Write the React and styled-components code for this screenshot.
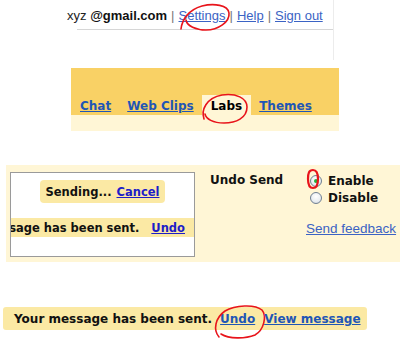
import styled, { createGlobalStyle } from "styled-components";

const GlobalStyle = createGlobalStyle`
  html, body {
    margin: 0;
    padding: 0;
    background: #ffffff;
  }
  body {
    width: 400px;
    height: 344px;
    overflow: hidden;
    font-family: "DejaVu Sans", Verdana, sans-serif;
  }
`;

const Page = styled.div`
  width: 400px;
  height: 344px;
  overflow: hidden;
`;

/* top account bar */
const AccountArea = styled.div`
  margin-left: 77px;
  width: 256px;
  height: 60px;
  border-right: 1px solid #ececec;
`;

const AccountLine = styled.div`
  height: 30px;
  box-sizing: border-box;
  padding-top: 8px;
  border-bottom: 1px solid #d6d6d6;
`;

const UserText = styled.div`
  margin-left: -10px;
  font-family: "Liberation Sans", Arial, sans-serif;
  font-size: 13px;
  line-height: 16px;
  color: #222;
  white-space: nowrap;
  b {
    color: #111;
  }
`;

const Sep = styled.span`
  color: #777;
  margin: 0 4px;
`;

const TopLink = styled.a`
  color: #3b63c4;
  text-decoration: underline;
`;

/* header tabs */
const Header = styled.div`
  margin: 8px 0 0 71px;
  width: 268px;
`;

const TabBand = styled.div`
  height: 47px;
  box-sizing: border-box;
  padding-left: 1px;
  background: #f9d165;
  display: flex;
  align-items: flex-end;
`;

const TabStrip = styled.div`
  height: 16px;
  background: #fff6d6;
`;

const Tab = styled.div`
  height: 20px;
  padding: ${({ $active }) => ($active ? "1px 9px 0" : "1px 8px 0")};
  box-sizing: border-box;
  line-height: 20px;
  font-size: 12px;
  font-weight: bold;
  background: ${({ $active }) => ($active ? "#fff6d6" : "transparent")};
  color: ${({ $active }) => ($active ? "#000" : "#1f56b5")};
  text-decoration: ${({ $active }) => ($active ? "none" : "underline")};
  position: relative;
`;

/* settings panel */
const SettingsPanel = styled.div`
  margin: 34px 0 0 6px;
  height: 97px;
  box-sizing: border-box;
  padding: 7px 0 0 4px;
  background: #fff6d6;
  display: grid;
  grid-template-columns: 185px 111px 1fr;
  align-items: start;
`;

const Preview = styled.div`
  height: 85px;
  box-sizing: border-box;
  border: 1px solid #9a9a9a;
  background: #fff;
  display: flex;
  flex-direction: column;
  align-items: center;
  padding-top: 7px;
  overflow: hidden;
`;

const Pill = styled.div`
  height: 23px;
  padding: 0 6px;
  border-radius: 4px;
  background: #fbe9a4;
  display: flex;
  align-items: center;
  gap: 5px;
  font-size: 11.5px;
  font-weight: bold;
  color: #111;
  white-space: nowrap;
`;

const PreviewLink = styled.a`
  color: #1d1dc8;
  text-decoration: underline;
`;

const SentBand = styled.div`
  margin-top: 15px;
  align-self: stretch;
  height: 19px;
  box-sizing: border-box;
  padding-right: 9px;
  background: #fbe9a4;
  display: flex;
  justify-content: flex-end;
  align-items: center;
  gap: 12px;
  overflow: hidden;
  white-space: nowrap;
  font-size: 11.5px;
  font-weight: bold;
  color: #111;
  span {
    flex-shrink: 0;
  }
`;

const Label = styled.div`
  margin-left: 15px;
  font-size: 12px;
  font-weight: bold;
  line-height: 16px;
  color: #111;
  white-space: nowrap;
`;

const Options = styled.div`
  display: flex;
  flex-direction: column;
`;

const OptionRow = styled.label`
  display: flex;
  align-items: center;
  gap: 6px;
  height: 17px;
  padding-left: 4px;
  font-size: 12px;
  font-weight: bold;
  color: #111;
`;

const Radio = styled.span`
  position: relative;
  width: 10px;
  height: 10px;
  border-radius: 50%;
  border: 1px solid #6f7f92;
  background: radial-gradient(circle at 50% 35%, #ffffff 0%, #e9edf1 60%, #c9d0d8 100%);
  display: flex;
  align-items: center;
  justify-content: center;
  flex-shrink: 0;
  &::after {
    content: "";
    width: 4px;
    height: 4px;
    border-radius: 50%;
    background: ${({ $checked }) => ($checked ? "#23b03a" : "transparent")};
  }
`;

const Feedback = styled.a`
  margin-top: 15px;
  font-family: "Liberation Sans", Arial, sans-serif;
  font-size: 13.5px;
  line-height: 16px;
  color: #3b63c4;
  text-decoration: underline;
  white-space: nowrap;
`;

/* bottom notification */
const Notice = styled.div`
  margin: 45px 0 0 3px;
  width: 364px;
  height: 23px;
  box-sizing: border-box;
  padding-left: 11px;
  border-radius: 3px;
  background: #fbe9a4;
  display: flex;
  align-items: center;
  font-size: 12px;
  font-weight: bold;
  color: #111;
  white-space: nowrap;
`;

const NoticeLink = styled.a`
  margin-left: ${({ $gap }) => $gap}px;
  color: #1f56b5;
  text-decoration: underline;
  position: relative;
`;

/* red hand-drawn annotation */
const Circled = styled.span`
  position: relative;
  display: inline-block;
`;

const Mark = styled.svg`
  position: absolute;
  left: ${({ $x }) => $x}px;
  top: ${({ $y }) => $y}px;
  overflow: visible;
  pointer-events: none;
  fill: none;
  stroke: #e8141b;
  stroke-width: ${({ $w }) => $w || 1.6};
  stroke-linecap: round;
`;

const Scribble = ({ x, y, w, h, d, sw }) => (
  <Mark $x={x} $y={y} $w={sw} width={w} height={h} viewBox={`0 0 ${w} ${h}`}>
    <path d={d} />
  </Mark>
);

export default function App() {
  return (
    <Page>
      <GlobalStyle />
      <AccountArea>
        <AccountLine>
          <UserText>
            xyz <b>@gmail.com</b>
            <Sep>|</Sep>
            <Circled>
              <TopLink>Settings</TopLink>
              <Scribble
                x={-5}
                y={-6}
                w={58}
                h={30}
                d="M7,27 C8,18 14,8 28,4 C40,1 54,3 55,11 C56,20 44,28 32,28 C22,28 13,24 12,18"
              />
            </Circled>
            <Sep>|</Sep>
            <TopLink>Help</TopLink>
            <Sep>|</Sep>
            <TopLink>Sign out</TopLink>
          </UserText>
        </AccountLine>
      </AccountArea>

      <Header>
        <TabBand>
          <Tab>Chat</Tab>
          <Tab>Web Clips</Tab>
          <Tab $active>
            Labs
            <Scribble
              x={-2}
              y={-3}
              w={50}
              h={34}
              d="M4,27 C1,18 6,6 22,3 C36,1 47,6 47,15 C47,26 36,31 24,31 C13,31 6,27 5,22"
            />
          </Tab>
          <Tab>Themes</Tab>
        </TabBand>
        <TabStrip />
      </Header>

      <SettingsPanel>
        <Preview>
          <Pill>
            Sending...
            <PreviewLink>Cancel</PreviewLink>
          </Pill>
          <SentBand>
            <span>Your message has been sent.</span>
            <PreviewLink>Undo</PreviewLink>
          </SentBand>
        </Preview>
        <Label>Undo Send</Label>
        <Options>
          <OptionRow>
            <Circled>
              <Radio $checked />
              <Scribble
                x={-4}
                y={-7}
                w={15}
                h={22}
                sw={2.2}
                d="M7,2 C11,2 12,6 12,11 C12,17 10,20 7,20 C3,20 2,16 2,11 C2,5 3,2 7,2 Z"
              />
            </Circled>
            Enable
          </OptionRow>
          <OptionRow>
            <Radio />
            Disable
          </OptionRow>
          <Feedback>Send feedback</Feedback>
        </Options>
      </SettingsPanel>

      <Notice>
        Your message has been sent.
        <NoticeLink $gap={8}>
          Undo
          <Scribble
            x={-9}
            y={-8}
            w={56}
            h={36}
            d="M8,33 C2,26 4,14 14,7 C24,1 44,0 51,6 C56,12 53,26 44,31 C34,35 18,35 10,30"
          />
        </NoticeLink>
        <NoticeLink $gap={9}>View message</NoticeLink>
      </Notice>
    </Page>
  );
}
